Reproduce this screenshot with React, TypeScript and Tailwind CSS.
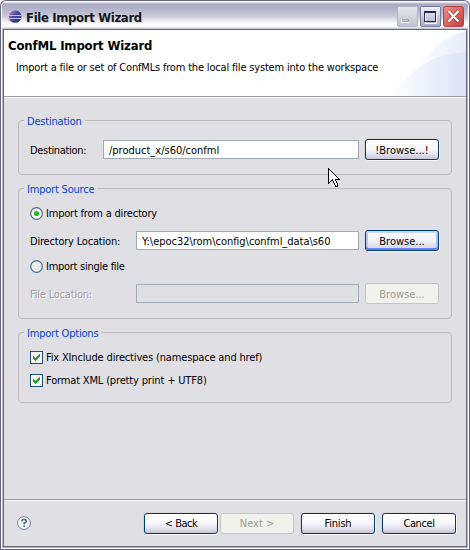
import React from 'react';

type Kids = { children?: React.ReactNode };

function Logo() {
  return (
    <svg width="15" height="15" viewBox="0 0 15 15" className="shrink-0">
      <defs>
        <linearGradient id="globe" x1="0" y1="0" x2="1" y2="1"><stop offset="0" stopColor="#b3a3d4" /><stop offset=".4" stopColor="#4f4ba2" /><stop offset="1" stopColor="#262777" /></linearGradient>
      </defs>
      <circle cx="6.3" cy="7.5" r="6.2" fill="#e9b0d4" />
      <circle cx="8.2" cy="7.5" r="6.3" fill="url(#globe)" />
      <path d="M2 6.5H14.5M2 9.5H14.5" stroke="#b9c4f0" strokeWidth="1" />
    </svg>
  );
}

function TitleBar() {
  return (
    <header className="flex h-[29px] shrink-0 items-start rounded-t-[6px] border-x border-t border-[#68677f] bg-[linear-gradient(180deg,#ffffff_0px,#f4f4f8_1px,#a9a9c1_3px,#b3b3ca_8px,#c9c9d9_15px,#ededf2_20px,#ffffff_23px,#f7f7fa_26px,#b5b5c4_28px)] pl-[5px] pr-[5px] pt-[5px] shadow-[inset_1px_0_0_#fff,inset_-1px_0_0_#fff]">
      <div className="ml-[1px] mt-[3px]"><Logo /></div>
      <h1 className="ml-[4px] mt-[4px] whitespace-nowrap font-['DejaVu_Sans_Condensed','DejaVu_Sans',sans-serif] text-[13px] font-bold leading-[16px] tracking-[-0.35px] text-[#15151c] [font-stretch:condensed] [text-shadow:1px_1px_0_#d5d5df]">File Import Wizard</h1>
      <div className="ml-auto flex gap-[2px]">
        <svg width="21" height="21" shapeRendering="crispEdges">
          <defs>
            <linearGradient id="min" x1="0" y1="0" x2="0" y2="1"><stop offset="0" stopColor="#e7e7ed" /><stop offset="1" stopColor="#c4c4d2" /></linearGradient>
            <linearGradient id="max" x1="0" y1="0" x2="0" y2="1"><stop offset="0" stopColor="#f3f3f8" /><stop offset="1" stopColor="#a7a9c4" /></linearGradient>
            <linearGradient id="close" x1="0" y1="0" x2="1" y2="1"><stop offset="0" stopColor="#ed918b" /><stop offset=".5" stopColor="#df6560" /><stop offset="1" stopColor="#bd3d40" /></linearGradient>
          </defs>
          <rect x=".5" y=".5" width="20" height="20" rx="2" fill="url(#min)" stroke="#b2b2c2" />
          <rect x="4" y="13" width="8" height="4" fill="#f6f6fa" />
          <rect x="5" y="13" width="7" height="3" fill="#a4a4b2" />
          <rect x="5" y="14" width="6" height="1" fill="#c9c9d3" />
        </svg>
        <svg width="21" height="21" shapeRendering="crispEdges">
          <rect x=".5" y=".5" width="20" height="20" rx="2" fill="url(#max)" stroke="#777b9b" />
          <path d="M5 6h11v11H5z" fill="none" stroke="#fff" />
          <path d="M4.5 5.5h11v10h-11zM4 6.5h12" fill="none" stroke="#262941" />
        </svg>
        <svg width="21" height="21">
          <rect x=".5" y=".5" width="20" height="20" rx="2" fill="url(#close)" stroke="#b34248" />
          <path d="M5.5 5L15.5 15.5M15.5 5L5.5 15.5" stroke="#8f3038" strokeWidth="3.4" />
          <path d="M5.5 5L15.5 15.5M15.5 5L5.5 15.5" stroke="#fff" strokeWidth="2.3" />
        </svg>
      </div>
    </header>
  );
}

function Group({ title, className, children }: Kids & { title: string; className: string }) {
  return (
    <section className={`mx-[14px] flex flex-col rounded-[4px] border border-[#bdb8be] ${className}`}>
      <h3 className="-mt-[7px] ml-[5px] h-[14px] w-fit bg-[#e0dfe4] px-[3px] leading-[16px] tracking-[-0.2px] text-[#0046d5]">{title}</h3>
      {children}
    </section>
  );
}

function Button({ children, kind = 'normal', text = '' }: Kids & { kind?: 'normal' | 'default' | 'disabled'; text?: string }) {
  const look = {
    normal: 'border-[#003c74] bg-[linear-gradient(180deg,#ffffff_0%,#f8f8fc_45%,#e8e8f1_70%,#c6c5d7_100%)] text-black shadow-[1px_1px_0_#f4f4f6,-1px_-1px_0_#d6d5da]',
    default: 'border-[#003c74] bg-[linear-gradient(180deg,#ffffff_0%,#f3f3fa_50%,#d0cfdf_100%)] text-black shadow-[inset_0_2px_0_#c5d9fb,inset_0_-2px_0_#6982ee,inset_2px_0_0_#b5c9f4,inset_-2px_0_0_#adc0f0,1px_1px_0_#f4f4f6]',
    disabled: 'border-[#c5c4bf] bg-[#f1f1ed] text-[#a1a192]',
  }[kind];
  return (
    <button className={`flex h-[21px] w-[74px] shrink-0 items-center justify-center rounded-[3px] border pt-[2px] leading-[14px] ${look} ${text}`}>{children}</button>
  );
}

function Radio({ on }: { on?: boolean }) {
  return (
    <svg width="13" height="13" className="shrink-0">
      <circle cx="6.5" cy="6.5" r="5.8" fill={on ? '#fbfbfa' : '#edece8'} stroke="#426d91" strokeWidth="1.2" />
      {on && <circle cx="6.5" cy="6.5" r="2.6" fill="#29b52b" />}
    </svg>
  );
}

function Check() {
  return (
    <svg width="13" height="13" className="shrink-0" shapeRendering="crispEdges">
      <rect x=".5" y=".5" width="12" height="12" fill="#f7f7f5" stroke="#1c5180" />
      <path d="M3 5h1v1h1v1h1v-1h1v-1h1v-1h1v-1h1v3h-1v1h-1v1h-1v1h-1v1h-1v-1h-1v-1h-1z" fill="#21a121" />
    </svg>
  );
}

export default function App() {
  return (
    <div className="relative flex h-[550px] w-[470px] flex-col overflow-hidden bg-white font-['DejaVu_Sans_Condensed','DejaVu_Sans',sans-serif] text-[11px] text-black [font-stretch:condensed]">
      <TitleBar />
      <div className="flex grow flex-col border-x border-b border-[#65647f] bg-white px-[1px] pb-[1px]">
        <div className="flex grow flex-col border-x border-b border-[#b5b4c5]">
          <main className="flex grow flex-col border border-[#68677f] bg-[#e0dfe4]">
            <div className="relative h-[66px] shrink-0 bg-white">
              <svg width="75" height="66" viewBox="0 0 75 66" className="absolute right-0 top-0">
                <defs>
                  <linearGradient id="arc" x1="0" y1="0" x2="1" y2="0"><stop offset="0" stopColor="#fff" /><stop offset=".35" stopColor="#f8fafe" /><stop offset="1" stopColor="#e6ecf9" /></linearGradient>
                  <linearGradient id="arcFront" x1="0" y1="0" x2="1" y2="0"><stop offset="0" stopColor="#fff" /><stop offset=".5" stopColor="#edf1fb" /><stop offset="1" stopColor="#dbe3f6" /></linearGradient>
                </defs>
                <path d="M15 66Q33 11 75 1V66Z" fill="url(#arc)" />
                <path d="M0 66Q31 23 75 22V66Z" fill="url(#arcFront)" />
              </svg>
              <h2 className="relative ml-[4px] pt-[8px] text-[13px] font-bold leading-[16px] tracking-[-0.15px]">ConfML Import Wizard</h2>
              <p className="relative ml-[12px] mt-[7px] whitespace-nowrap leading-[14px] tracking-[-0.18px]">Import a file or set of ConfMLs from the local file system into the workspace</p>
            </div>
            <div className="h-[2px] shrink-0 border-b border-white bg-[#9d9ca1]" />
            <Group title="Destination" className="mt-[22px] h-[55px]">
              <div className="ml-[11px] mt-[11px] flex items-center">
                <label className="w-[73px] pt-[3px] tracking-[-0.33px]">Destination:</label>
                <div className="h-[19px] w-[256px] border border-[#a0abb4] bg-white pl-[5px] leading-[19px]">/product_x/s60/confml</div>
                <div className="ml-[6px]"><Button>!Browse...!</Button></div>
              </div>
            </Group>
            <Group title="Import Source" className="mt-[13px] h-[131px]">
              <div className="ml-[11px] mt-[11px] flex h-[13px] items-center gap-[3px]"><Radio on /><span className="pt-[2px] tracking-[-0.2px]">Import from a directory</span></div>
              <div className="ml-[11px] mt-[10px] flex items-center">
                <label className="w-[106px] pt-[3px] tracking-[-0.2px]">Directory Location:</label>
                <div className="h-[19px] w-[223px] border border-[#a0abb4] bg-white pl-[5px] leading-[19px] tracking-[-0.03px]">Y:\epoc32\rom\config\confml_data\s60</div>
                <div className="ml-[6px]"><Button kind="default">Browse...</Button></div>
              </div>
              <div className="ml-[11px] mt-[9px] flex h-[13px] items-center gap-[3px]"><Radio /><span className="pt-[2px] tracking-[-0.27px]">Import single file</span></div>
              <div className="ml-[11px] mt-[10px] flex items-center">
                <label className="w-[106px] pt-[3px] tracking-[-0.2px] text-[#9f9ea3] [text-shadow:1px_1px_0_#fff]">File Location:</label>
                <div className="h-[19px] w-[223px] border border-[#a0abb4]" />
                <div className="ml-[6px]"><Button kind="disabled">Browse...</Button></div>
              </div>
            </Group>
            <Group title="Import Options" className="mt-[13px] h-[71px]">
              <div className="ml-[11px] mt-[11px] flex h-[13px] items-center gap-[3px]"><Check /><span className="pt-[2px] tracking-[-0.16px]">Fix XInclude directives (namespace and href)</span></div>
              <div className="ml-[11px] mt-[10px] flex h-[13px] items-center gap-[3px]"><Check /><span className="pt-[2px] tracking-[-0.16px]">Format XML (pretty print + UTF8)</span></div>
            </Group>
            <footer className="mt-auto flex h-[47px] shrink-0 items-center border-t border-[#9d9ca1] pl-[13px] pr-[10px] shadow-[inset_0_1px_0_#fff]">
              <svg width="14" height="14"><circle cx="7" cy="7" r="6.4" fill="#f8f9fb" stroke="#66809e" /><path d="M4.8 5.4Q4.8 3.5 7 3.5Q9.3 3.5 9.3 5.2Q9.3 6.2 7.2 7.1V8.4M7.2 9.4V11" fill="none" stroke="#4a6685" strokeWidth="1.6" /></svg>
              <div className="ml-auto flex gap-[2px]"><Button text="tracking-[-0.5px]">&lt; Back</Button><Button kind="disabled">Next &gt;</Button></div>
              <div className="ml-[7px] flex gap-[7px]"><Button text="tracking-[-0.2px]">Finish</Button><Button text="tracking-[-0.4px]">Cancel</Button></div>
            </footer>
          </main>
        </div>
      </div>
      <svg width="13" height="21" viewBox="0 0 13 21" className="absolute left-[328px] top-[167px]" shapeRendering="crispEdges">
        <path d="M.5 1.5V16.5L4.5 12.5L7.5 19.5H9.5V17.5L7.5 12.5H11.5Z" fill="white" stroke="black" />
      </svg>
    </div>
  );
}
